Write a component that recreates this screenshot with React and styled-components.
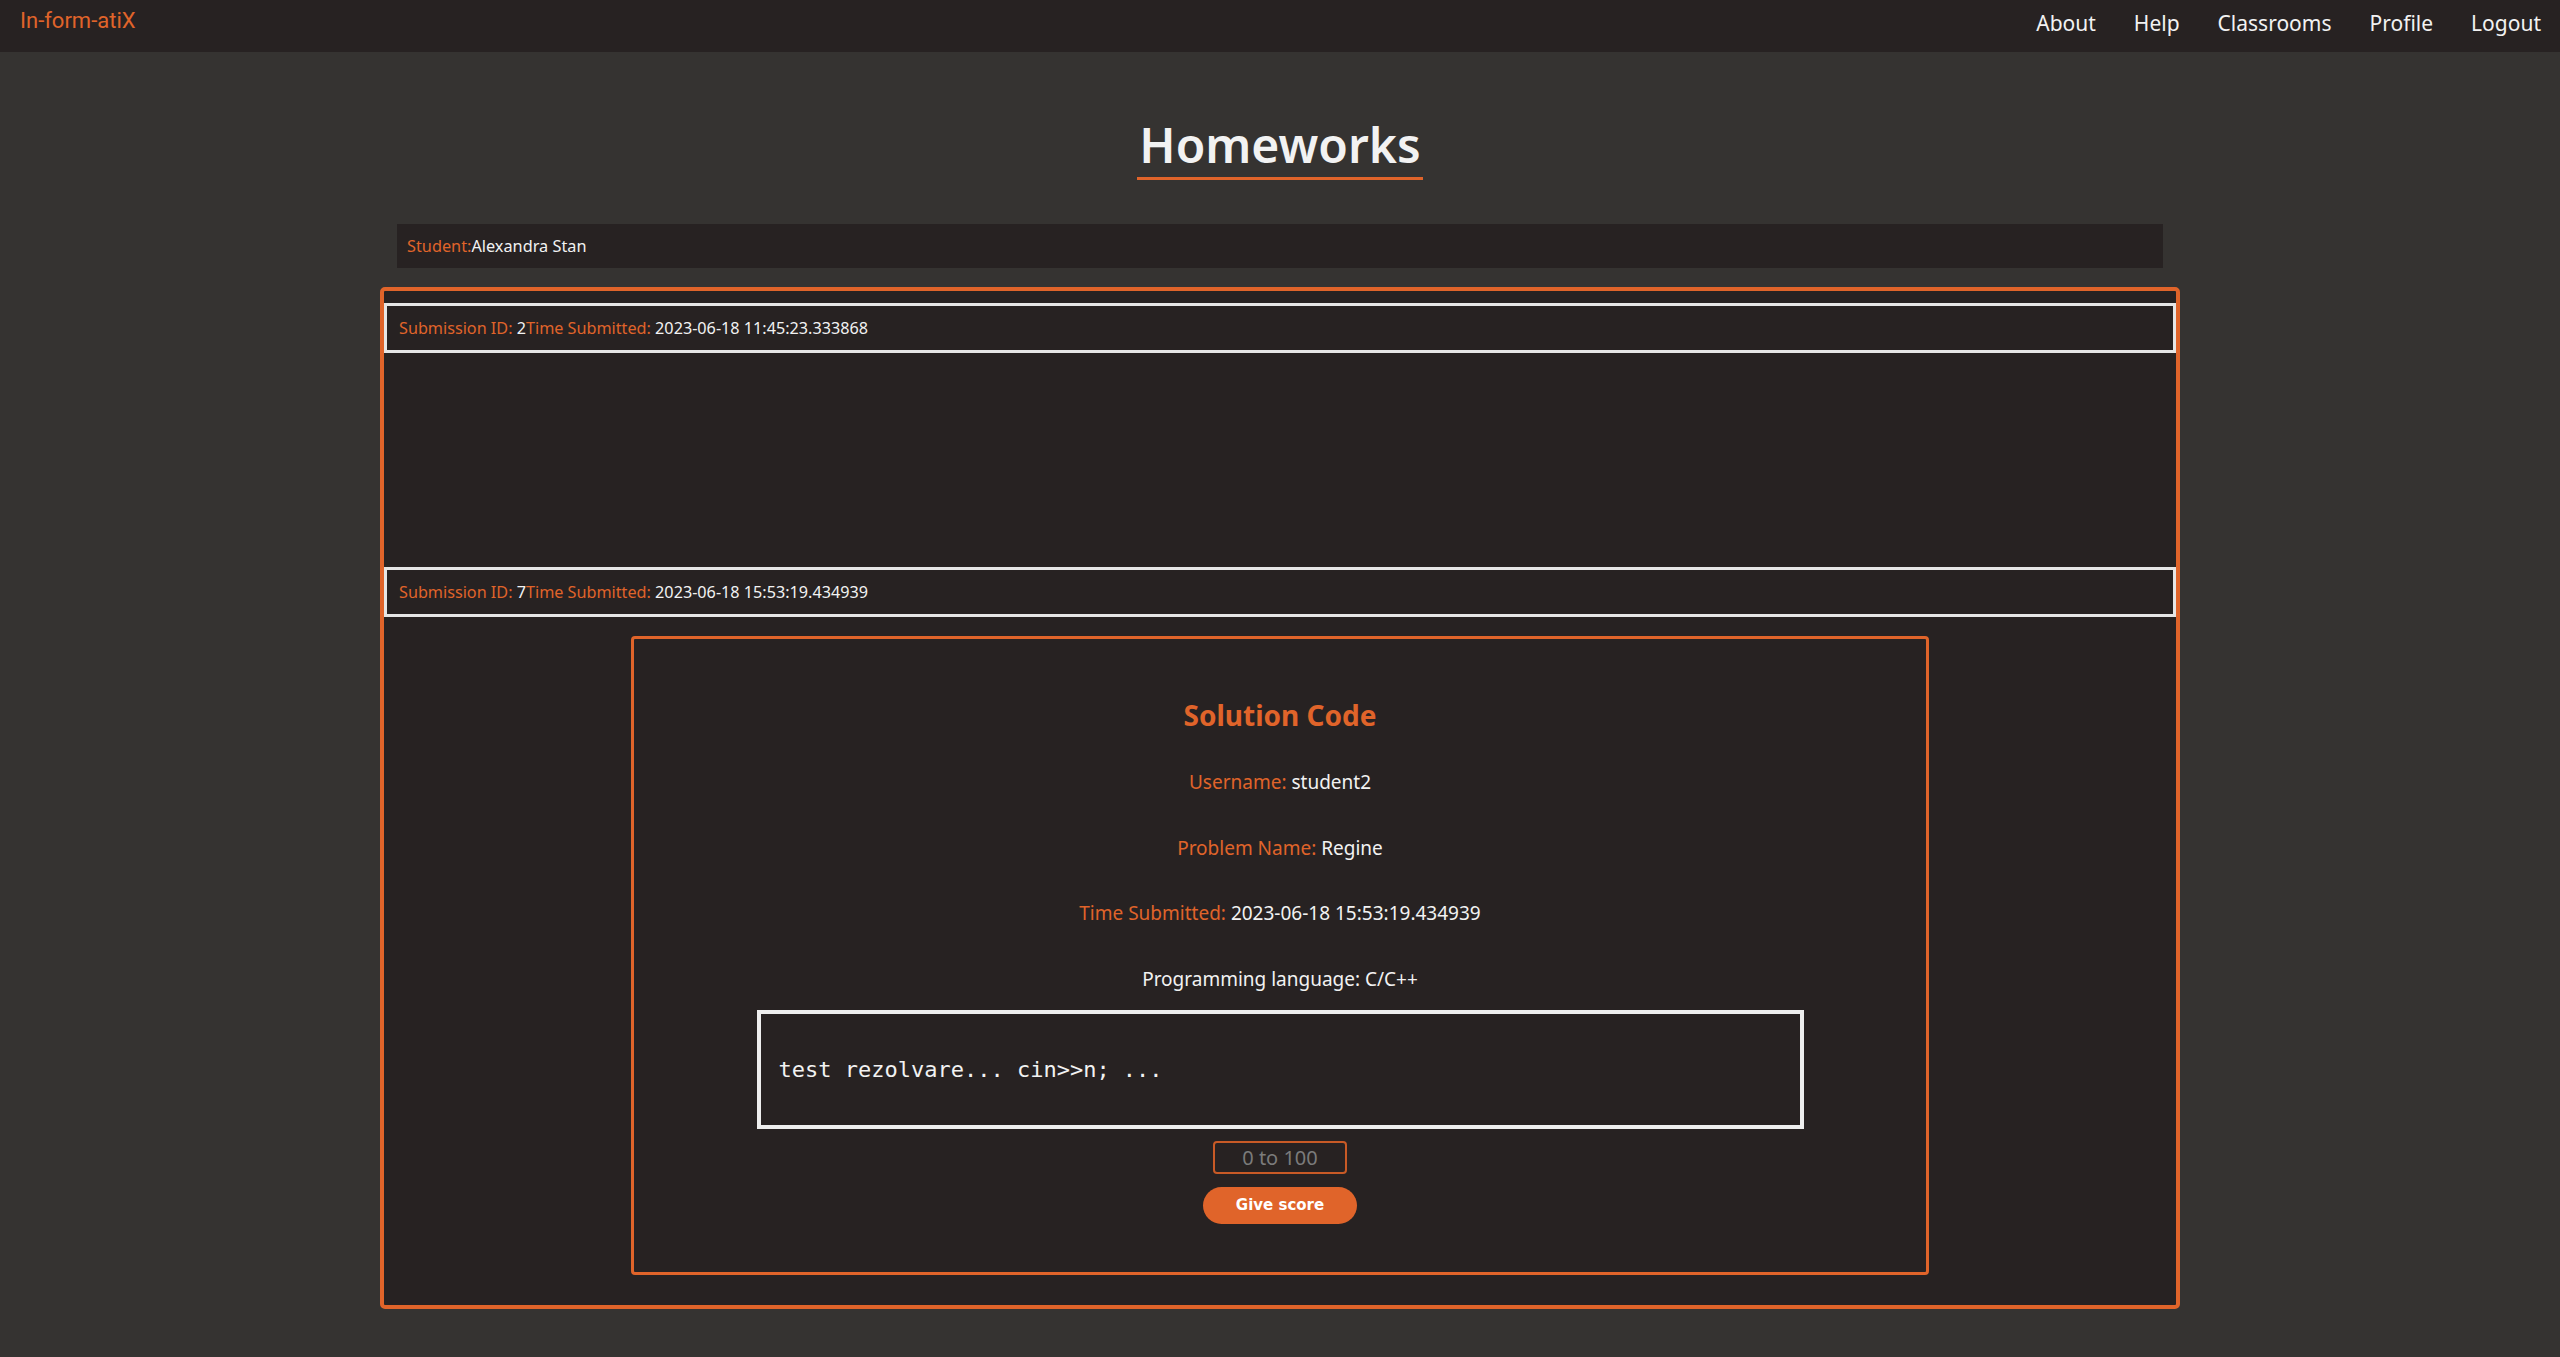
import React from "react";
import styled, { createGlobalStyle } from "styled-components";

const ORANGE = "#e0642a";
const CARD = "#272222";
const PAGE = "#353331";
const TEXT = "#f2f2f2";

const Global = createGlobalStyle`
  html, body { margin: 0; padding: 0; background: ${PAGE}; }
  body { font-family: "Noto Sans", "Open Sans", sans-serif; color: ${TEXT}; min-height: 1357px; }
  * { box-sizing: border-box; }
`;

const NavBar = styled.nav`
  height: 52px;
  background: ${CARD};
  display: flex;
  justify-content: space-between;
  align-items: flex-start;
  padding: 8px 19px 0 20px;
`;

const Logo = styled.a`
  font-family: Roboto, "Liberation Sans", sans-serif;
  font-size: 22px;
  color: ${ORANGE};
  text-decoration: none;
  line-height: normal;
`;

const NavLinks = styled.div`
  display: flex;
  gap: 38px;
  padding-top: 1px;
`;

const NavLink = styled.a`
  font-family: "Noto Sans", sans-serif;
  font-size: 21px;
  color: ${TEXT};
  text-decoration: none;
  line-height: normal;
`;

const Main = styled.main`
  display: flex;
  flex-direction: column;
  align-items: center;
  padding-top: 60px;
`;

const Title = styled.h1`
  margin: 0;
  font-size: 48px;
  font-weight: 600;
  line-height: normal;
  color: ${TEXT};
  border-bottom: 3px solid ${ORANGE};
  padding: 0 2px;
`;

const StudentBar = styled.div`
  margin-top: 44px;
  width: 1766px;
  height: 44px;
  background: ${CARD};
  display: flex;
  align-items: center;
  padding-left: 10px;
  font-size: 16.3px;
`;

const Label = styled.span`
  color: ${ORANGE};
`;

const Value = styled.span`
  color: ${TEXT};
`;

const SubmissionsBox = styled.section`
  margin-top: 19px;
  width: 1800px;
  background: ${CARD};
  border: 4px solid ${ORANGE};
  border-radius: 5px;
  padding: 12px 0 30px;
  display: flex;
  flex-direction: column;
  align-items: center;
`;

const SubmissionHeader = styled.div`
  width: 100%;
  height: 50px;
  border: 3px solid #e6e6e6;
  display: flex;
  align-items: center;
  padding-left: 12px;
  font-size: 16.2px;
`;

const SubmissionBody = styled.div`
  width: 100%;
  height: ${(p) => p.$height}px;
`;

const SolutionBox = styled.div`
  margin-top: 19px;
  width: 1298px;
  height: 639px;
  border: 3px solid ${ORANGE};
  border-radius: 4px;
  display: flex;
  flex-direction: column;
  align-items: center;
`;

const SolutionTitle = styled.h2`
  margin: 57px 0 0;
  font-size: 28px;
  font-weight: 700;
  line-height: normal;
  color: ${ORANGE};
`;

const InfoList = styled.div`
  margin-top: 35px;
  display: flex;
  flex-direction: column;
  align-items: center;
  gap: 39.5px;
`;

const InfoRow = styled.p`
  margin: 0;
  font-size: 19px;
  line-height: normal;
  color: ${TEXT};
`;

const CodeBox = styled.pre`
  margin: 18px 0 0;
  width: 1047px;
  height: 119px;
  border: 4px solid #eeeeee;
  display: flex;
  align-items: center;
  padding-left: 18px;
  font-family: "DejaVu Sans Mono", "Liberation Mono", monospace;
  font-size: 22px;
  color: ${TEXT};
`;

const ScoreInput = styled.input`
  margin-top: 12px;
  width: 134px;
  height: 33px;
  background: transparent;
  border: 2px solid #c85a26;
  border-radius: 4px;
  font-family: "Noto Sans", sans-serif;
  font-size: 20px;
  text-align: center;
  color: ${TEXT};
  outline: none;
  &::placeholder { color: #7b7b7b; }
`;

const ScoreButton = styled.button`
  margin-top: 13px;
  width: 154px;
  height: 37px;
  border: none;
  border-radius: 19px;
  background: ${ORANGE};
  color: #fff;
  font-family: "DejaVu Sans", Verdana, sans-serif;
  font-weight: 700;
  font-size: 15px;
  cursor: pointer;
`;

const submissions = [
  { id: 2, time: "2023-06-18 11:45:23.333868", open: false },
  { id: 7, time: "2023-06-18 15:53:19.434939", open: true },
];

function Submission({ s }) {
  return (
    <>
      <SubmissionHeader>
        <Label>Submission ID:&nbsp;</Label>
        <Value>{s.id}</Value>
        <Label>Time Submitted:&nbsp;</Label>
        <Value>{s.time}</Value>
      </SubmissionHeader>
      {s.open ? (
        <SolutionBox>
          <SolutionTitle>Solution Code</SolutionTitle>
          <InfoList>
            <InfoRow>
              <Label>Username: </Label>student2
            </InfoRow>
            <InfoRow>
              <Label>Problem Name: </Label>Regine
            </InfoRow>
            <InfoRow>
              <Label>Time Submitted: </Label>
              {s.time}
            </InfoRow>
            <InfoRow>Programming language: C/C++</InfoRow>
          </InfoList>
          <CodeBox>test rezolvare... cin&gt;&gt;n; ...</CodeBox>
          <ScoreInput placeholder="0 to 100" />
          <ScoreButton>Give score</ScoreButton>
        </SolutionBox>
      ) : (
        <SubmissionBody $height={214} />
      )}
    </>
  );
}

export default function App() {
  return (
    <>
      <Global />
      <NavBar>
        <Logo href="#">In-form-atiX</Logo>
        <NavLinks>
          <NavLink href="#">About</NavLink>
          <NavLink href="#">Help</NavLink>
          <NavLink href="#">Classrooms</NavLink>
          <NavLink href="#">Profile</NavLink>
          <NavLink href="#">Logout</NavLink>
        </NavLinks>
      </NavBar>
      <Main>
        <Title>Homeworks</Title>
        <StudentBar>
          <Label>Student:</Label>
          <Value>Alexandra Stan</Value>
        </StudentBar>
        <SubmissionsBox>
          {submissions.map((s) => (
            <Submission key={s.id} s={s} />
          ))}
        </SubmissionsBox>
      </Main>
    </>
  );
}
